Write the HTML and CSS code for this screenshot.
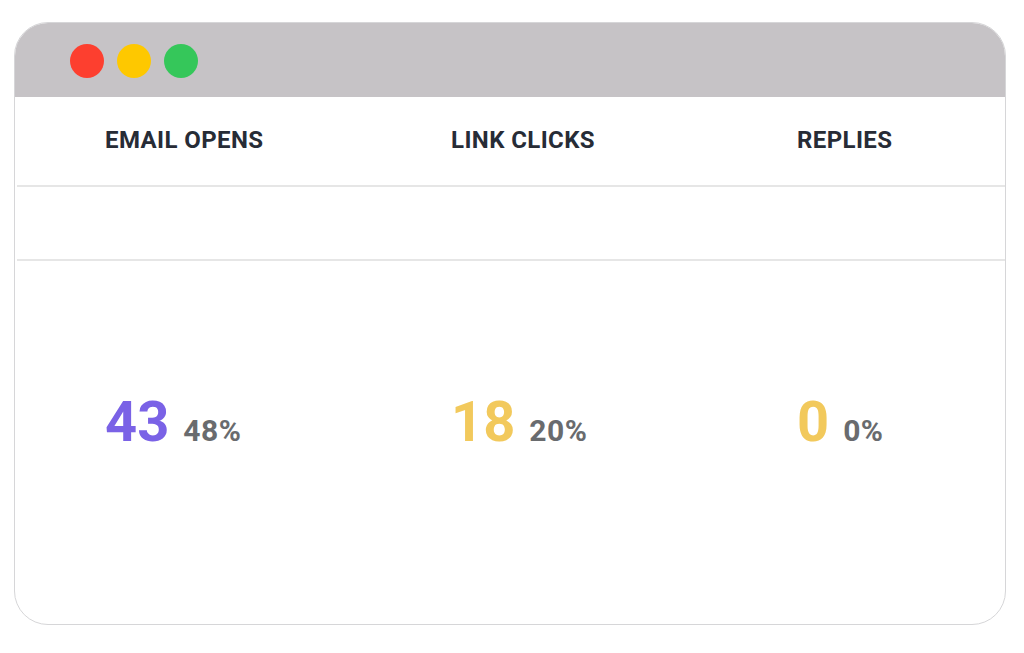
FILE: index.html
```html
<!DOCTYPE html>
<html>
<head>
<meta charset="utf-8">
<link rel="stylesheet" href="styles.css">
</head>
<body>
<div class="window">
  <div class="titlebar">
    <span class="dot red"></span>
    <span class="dot yellow"></span>
    <span class="dot green"></span>
  </div>
  <div class="content">
    <div class="row head">
      <div class="col">EMAIL OPENS</div>
      <div class="col">LINK CLICKS</div>
      <div class="col">REPLIES</div>
    </div>
    <div class="spacer"></div>
    <div class="row stats">
      <div class="col"><span class="num purple">43</span><span class="pct">48%</span></div>
      <div class="col"><span class="num gold">18</span><span class="pct">20%</span></div>
      <div class="col"><span class="num gold">0</span><span class="pct">0%</span></div>
    </div>
  </div>
</div>
</body>
</html>
```

FILE: styles.css
```css
html, body {
  margin: 0;
  padding: 0;
  background: #ffffff;
}
body {
  width: 1024px;
  height: 653px;
  padding: 22px 0 0 14px;
  box-sizing: border-box;
  font-family: Roboto, "Liberation Sans", sans-serif;
}
.window {
  width: 992px;
  height: 603px;
  box-sizing: border-box;
  border: 1.5px solid #d6d6d8;
  border-radius: 34px;
  overflow: hidden;
  display: flex;
  flex-direction: column;
  background: #fff;
}
.titlebar {
  height: 74px;
  flex: none;
  background: #c6c3c6;
  display: flex;
  align-items: center;
  gap: 13px;
  padding-left: 55px;
  padding-top: 1px;
  box-sizing: border-box;
}
.dot {
  width: 34px;
  height: 34px;
  border-radius: 50%;
}
.red { background: #fd3f2f; }
.yellow { background: #fec800; }
.green { background: #35c75a; }
.content {
  flex: 1;
  display: flex;
  flex-direction: column;
  padding-left: 2px;
}
.row {
  display: grid;
  grid-template-columns: 346px 346px 346px;
  padding-left: 88px;
}
.head {
  height: 90px;
  align-items: center;
  border-bottom: 2px solid #e6e6e6;
  box-sizing: border-box;
  font-weight: 700;
  font-size: 24px;
  letter-spacing: 0.4px;
  color: #272c36;
  padding-bottom: 2px;
}
.spacer {
  height: 74px;
  border-bottom: 2px solid #e6e6e6;
  box-sizing: border-box;
}
.stats {
  flex: 1;
  align-items: center;
  padding-bottom: 42px;
}
.col {
  white-space: nowrap;
}
.num {
  font-size: 56px;
  font-weight: 700;
  margin-right: 14px;
}
.purple { color: #7a62e6; }
.gold { color: #f2c95c; }
.pct {
  font-size: 30px;
  font-weight: 700;
  letter-spacing: 0.5px;
  color: #696b6e;
}
```
